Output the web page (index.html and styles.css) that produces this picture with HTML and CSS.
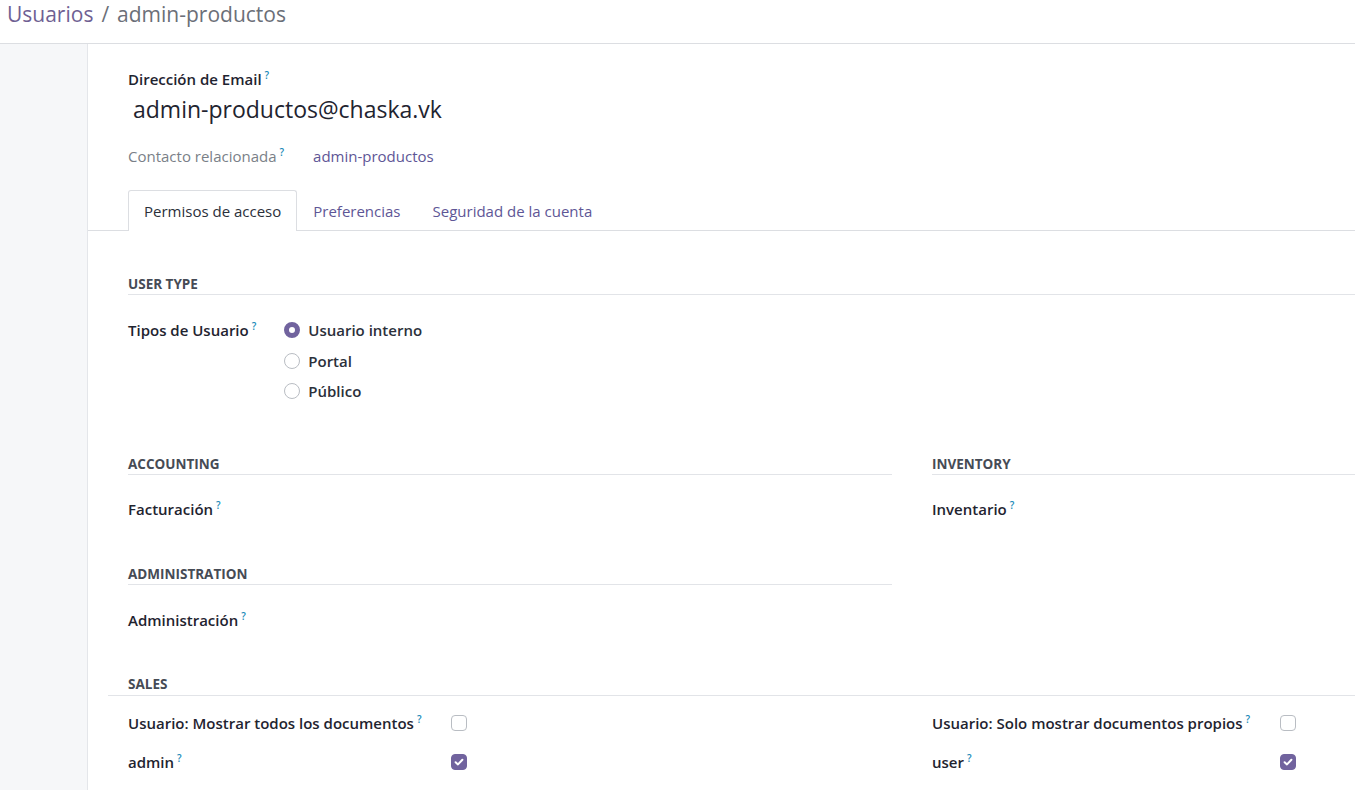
FILE: index.html
```html
<!DOCTYPE html>
<html lang="es">
<head>
<meta charset="utf-8">
<title>Usuarios / admin-productos</title>
<link rel="stylesheet" href="styles.css">
</head>
<body>
<header class="topbar">
  <nav class="breadcrumb"><a class="crumb-link" href="#">Usuarios</a><span class="crumb-sep">/</span><span class="crumb-current">admin-productos</span></nav>
</header>
<div class="main">
  <aside class="gutter"></aside>
  <div class="sheet">
    <div class="title-block">
      <div class="field-label">Dirección de Email<sup class="help">?</sup></div>
      <div class="email-value">admin-productos@chaska.vk</div>
      <div class="contact-row">
        <span class="muted-label">Contacto relacionada<sup class="help">?</sup></span>
        <a class="link" href="#">admin-productos</a>
      </div>
    </div>

    <div class="tabs">
      <span class="tab active">Permisos de acceso</span>
      <span class="tab">Preferencias</span>
      <span class="tab">Seguridad de la cuenta</span>
    </div>

    <div class="tab-content">
      <section class="group">
        <h3 class="group-title">User type</h3>
        <div class="field-grid usertype">
          <div class="label">Tipos de Usuario<sup class="help">?</sup></div>
          <div class="radios">
            <div class="radio-row"><span class="radio checked"></span><span class="radio-text">Usuario interno</span></div>
            <div class="radio-row"><span class="radio"></span><span class="radio-text">Portal</span></div>
            <div class="radio-row"><span class="radio"></span><span class="radio-text">Público</span></div>
          </div>
        </div>
      </section>

      <div class="two-col apps">
        <div class="col">
          <section class="group">
            <h3 class="group-title">Accounting</h3>
            <div class="field-row"><span class="label">Facturación<sup class="help">?</sup></span></div>
          </section>
          <section class="group admin-group">
            <h3 class="group-title">Administration</h3>
            <div class="field-row"><span class="label">Administración<sup class="help">?</sup></span></div>
          </section>
        </div>
        <div class="col">
          <section class="group">
            <h3 class="group-title">Inventory</h3>
            <div class="field-row"><span class="label">Inventario<sup class="help">?</sup></span></div>
          </section>
        </div>
      </div>

      <section class="group sales">
        <h3 class="group-title sales-title">Sales</h3>
        <div class="two-col">
          <div class="check-grid">
            <span class="label">Usuario: Mostrar todos los documentos<sup class="help">?</sup></span>
            <span class="checkbox"></span>
            <span class="label">admin<sup class="help">?</sup></span>
            <span class="checkbox checked"><svg viewBox="0 0 16 16" width="16" height="16"><path d="M4.6 8.2 L7 10.4 L11.4 5.8" fill="none" stroke="#fff" stroke-width="2" stroke-linecap="round" stroke-linejoin="round"/></svg></span>
          </div>
          <div class="check-grid">
            <span class="label">Usuario: Solo mostrar documentos propios<sup class="help">?</sup></span>
            <span class="checkbox"></span>
            <span class="label">user<sup class="help">?</sup></span>
            <span class="checkbox checked"><svg viewBox="0 0 16 16" width="16" height="16"><path d="M4.6 8.2 L7 10.4 L11.4 5.8" fill="none" stroke="#fff" stroke-width="2" stroke-linecap="round" stroke-linejoin="round"/></svg></span>
          </div>
        </div>
      </section>
    </div>
  </div>
</div>
</body>
</html>
```
FILE: styles.css
```css
* { box-sizing: border-box; }
html, body { margin: 0; padding: 0; }
body {
  font-family: "Open Sans", "Noto Sans", sans-serif;
  font-size: 15px;
  color: #1f2430;
  background: #fff;
  overflow: hidden;
  width: 1355px;
  height: 790px;
}
a { text-decoration: none; }

.topbar {
  height: 44px;
  border-bottom: 1px solid #dcdee2;
  padding: 0 0 0 7px;
  display: flex;
  align-items: center;
}
.breadcrumb {
  font-size: 21px;
  line-height: 30px;
  margin-top: -15px;
  white-space: nowrap;
}
.crumb-link { color: #6f5f93; }
.crumb-sep { color: #6b6f78; margin: 0 8px; }
.crumb-current { color: #6b6f78; }

.main {
  display: flex;
  height: 746px;
}
.gutter {
  flex: none;
  width: 88px;
  background: #f6f7f9;
  border-right: 1px solid #e4e6ea;
}
.sheet {
  flex: none;
  width: 1660px;
  background: #fff;
}

.title-block {
  padding: 24px 0 0 40px;
}
.field-label {
  font-weight: 600;
  font-size: 15px;
  line-height: 22px;
  color: #1f2430;
}
.help {
  color: #1a8ab8;
  font-size: 10px;
  font-weight: 600;
  margin-left: 3px;
  vertical-align: top;
  position: relative;
  top: -4px;
}
.email-value {
  font-size: 23px;
  line-height: 30px;
  margin: 4px 0 0 5px;
  color: #1f2430;
}
.contact-row {
  display: flex;
  align-items: center;
  margin-top: 21px;
  line-height: 22px;
  gap: 29px;
}
.muted-label { color: #7a7f88; font-size: 15px; }
.link { color: #5e5696; font-size: 15px; }

.tabs {
  margin-top: 23px;
  display: flex;
  border-bottom: 1px solid #dcdee2;
  padding-left: 40px;
  height: 41px;
}
.tab {
  padding: 0 15px;
  line-height: 40px;
  font-size: 15px;
  color: #5e5696;
  border: 1px solid transparent;
  border-bottom: none;
  border-radius: 3px 3px 0 0;
}
.tab.active {
  color: #2b303a;
  background: #fff;
  border-color: #dcdee2;
  height: 41px;
}

.tab-content {
  padding: 42px 0 0 40px;
}
.group-title {
  margin: 0;
  font-size: 13.5px;
  font-weight: 700;
  text-transform: uppercase;
  color: #464b55;
  padding-top: 2px;
  line-height: 19px;
  border-bottom: 1px solid #e2e4e8;
}
.field-grid {
  display: grid;
  grid-template-columns: max-content auto;
  column-gap: 28px;
  margin-top: 24px;
}
.label {
  font-weight: 600;
  font-size: 15px;
  line-height: 22px;
  color: #1f2430;
  white-space: nowrap;
}
.radios {
  display: flex;
  flex-direction: column;
  gap: 8.5px;
}
.radio-row {
  display: flex;
  align-items: center;
  gap: 8px;
  height: 22px;
}
.radio-text {
  font-weight: 600;
  font-size: 15px;
  color: #2b303a;
}
.radio {
  width: 16px;
  height: 16px;
  border-radius: 50%;
  border: 1px solid #b9bdc3;
  background: #fff;
  flex: none;
}
.radio.checked {
  border: 5px solid #71639e;
}

.two-col {
  display: grid;
  grid-template-columns: 764px 764px;
  column-gap: 40px;
}
.apps { margin-top: 51px; }
.field-row {
  margin-top: 23px;
}
.admin-group { margin-top: 43px; }
.admin-group .field-row { margin-top: 24px; }

.sales { margin-top: 42px; }
.sales-title {
  margin-left: -20px;
  padding-left: 20px;
  padding-top: 1px;
  line-height: 21px;
}
.check-grid {
  display: grid;
  grid-template-columns: max-content 16px;
  column-gap: 30px;
  row-gap: 17px;
  align-items: center;
  margin-top: 16px;
}
.checkbox {
  width: 16px;
  height: 16px;
  border: 1px solid #b9bdc3;
  border-radius: 4px;
  background: #fff;
  display: block;
}
.checkbox.checked {
  background: #71639e;
  border-color: #71639e;
  position: relative;
}
.checkbox.checked svg {
  position: absolute;
  left: -1px;
  top: -1px;
}
```
